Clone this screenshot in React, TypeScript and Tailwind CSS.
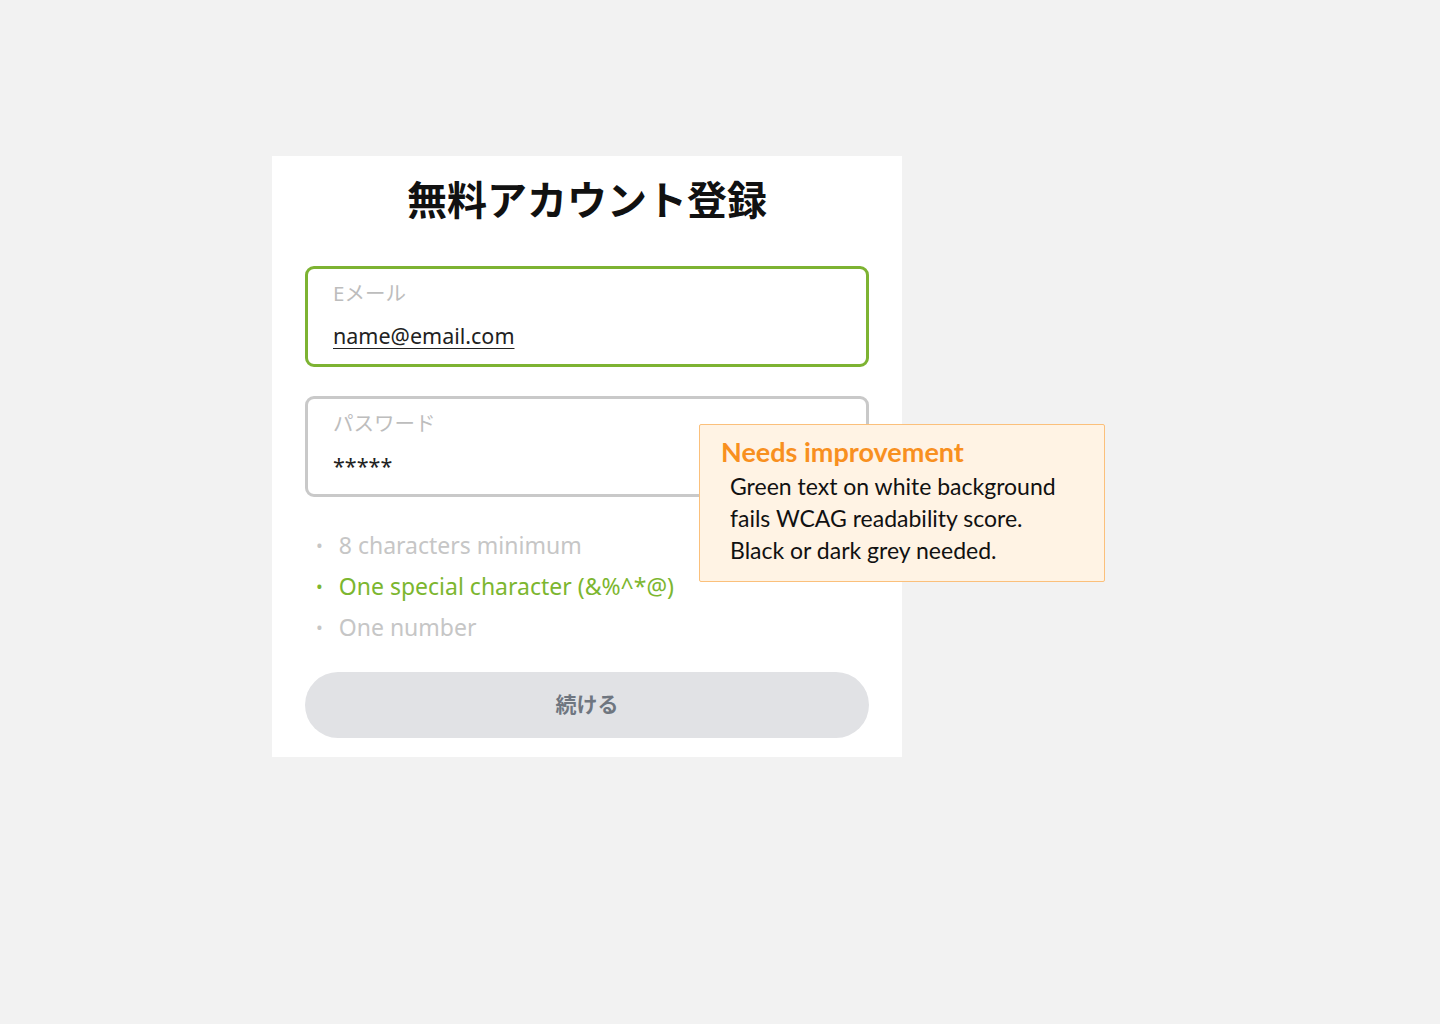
import React from "react";

const jp = { fontFamily: '"Noto Sans", "Noto Sans CJK JP", sans-serif' };
const lato = { fontFamily: 'Lato, "Noto Sans", sans-serif' };

const rules = [
  { text: "8 characters minimum", ok: false },
  { text: "One special character (&%^*@)", ok: true },
  { text: "One number", ok: false },
];

function Field({ label, value, active, underline }: { label: string; value: string; active?: boolean; underline?: boolean }) {
  return (
    <div
      className={
        "h-[101px] rounded-[9px] border-[3px] bg-white px-[25px] pt-[6px] " +
        (active ? "border-[#7db332]" : "border-[#c9c9c9]")
      }
    >
      <div className="text-[20.5px] leading-[36px] text-[#bdbdbd]">{label}</div>
      <div className={"mt-[10px] text-[21.5px] leading-[30px] text-[#222] " + (underline ? "underline underline-offset-[4px] decoration-1" : "")}>
        {value}
      </div>
    </div>
  );
}

export default function App() {
  return (
    <div className="relative min-h-[1024px] w-full bg-[#f2f2f2]" style={jp}>
      <div className="pt-[156px] pl-[272px]">
        <div className="w-[630px] bg-white px-[33px] pb-[19px] pt-[14px]">
          <h1 className="text-center text-[40px] font-bold leading-[60px] text-[#111]">無料アカウント登録</h1>

          <div className="mt-[36px] flex flex-col gap-[29px]">
            <Field label="Eメール" value="name@email.com" active underline />
            <Field label="パスワード" value="*****" />
          </div>

          <ul className="mt-[32px] flex flex-col gap-[8px] pl-[11px]">
            {rules.map((r) => (
              <li
                key={r.text}
                className={"flex items-center text-[23px] leading-[33px] " + (r.ok ? "text-[#7cb62f]" : "text-[#c6c6c6]")}
              >
                <span className="mr-[16px] text-[18px]">•</span>
                {r.text}
              </li>
            ))}
          </ul>

          <button className="mt-[28px] flex h-[66px] w-full items-center justify-center rounded-full bg-[#e1e2e5] text-[21px] font-bold text-[#6f7680]">
            続ける
          </button>
        </div>
      </div>

      <div
        className="absolute left-[699px] top-[424px] w-[406px] h-[158px] rounded-[2px] border border-[#fbc07b] bg-[#fff3e4] pl-[21px] pt-[9px]"
        style={lato}
      >
        <div className="text-[27px] font-bold leading-[36px] text-[#f8901f]">Needs improvement</div>
        <div className="pl-[9px] text-[23px] leading-[32px] text-[#111]">
          <div>Green text on white background</div>
          <div>fails WCAG readability score.</div>
          <div>Black or dark grey needed.</div>
        </div>
      </div>
    </div>
  );
}
